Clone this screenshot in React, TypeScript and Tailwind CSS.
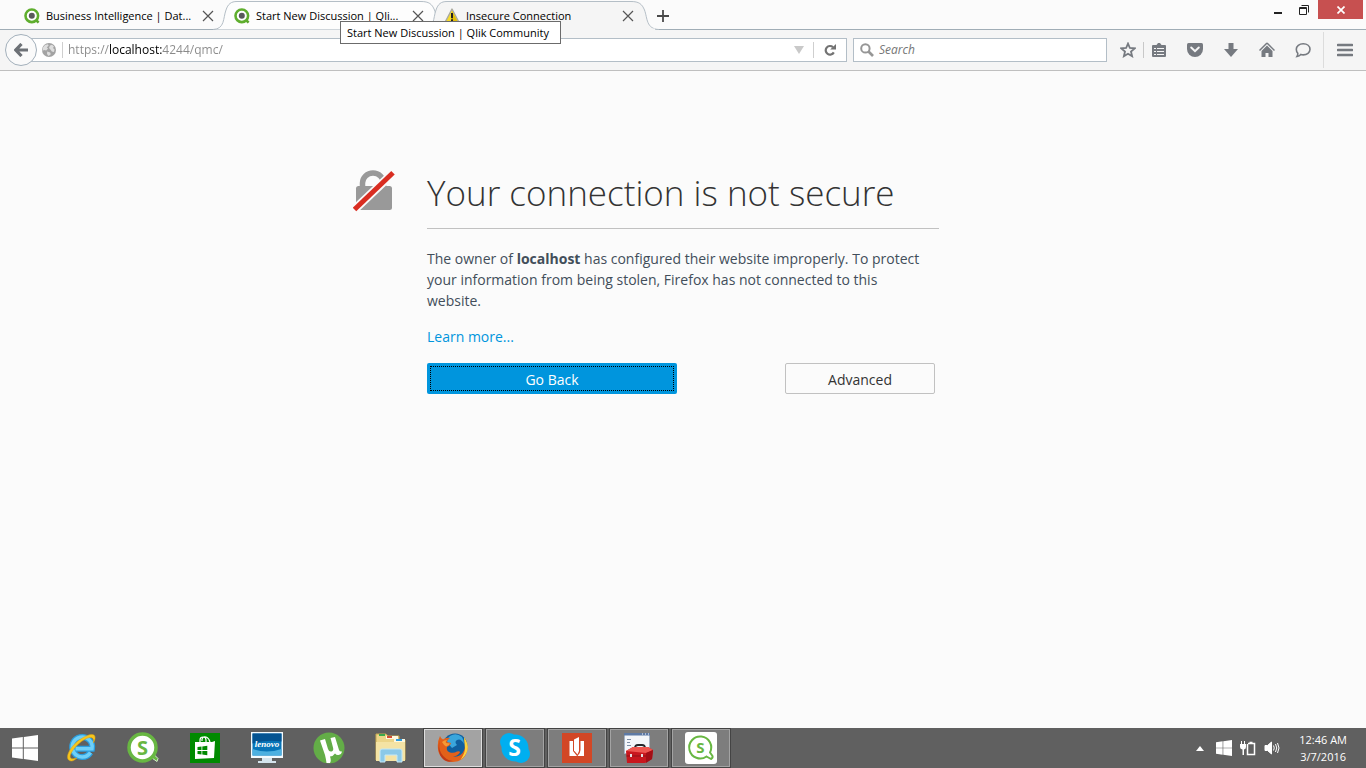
import type { ReactNode } from "react";

const TABS = [
  { title: "Business Intelligence | Dat...", icon: "qlik", shape: "none" },
  { title: "Start New Discussion | Qli...", icon: "qlik", shape: "hover" },
  { title: "Insecure Connection", icon: "warning", shape: "active" },
];

const PINNED = [
  { name: "Internet Explorer", icon: <ExplorerIcon /> },
  { name: "Qlik Sense", icon: <SenseIcon /> },
  { name: "Store", icon: <StoreIcon /> },
  { name: "Lenovo", icon: <LenovoIcon /> },
  { name: "uTorrent", icon: <TorrentIcon /> },
  { name: "File Explorer", icon: <FolderIcon /> },
];

const RUNNING = [
  { name: "Firefox", icon: <FirefoxIcon />, active: true },
  { name: "Skype", icon: <SkypeIcon />, active: false },
  { name: "Reader", icon: <ReaderIcon />, active: false },
  { name: "Toolbox", icon: <ToolboxIcon />, active: false },
  { name: "Qlik Sense Desktop", icon: <SenseDesktopIcon />, active: false },
];

function QlikIcon() {
  return (
    <svg width="16" height="16" viewBox="0 0 16 16" className="shrink-0" aria-hidden>
      <path d="M11 11l3.6 3.6" stroke="#5aa52b" strokeWidth="2.6" />
      <circle cx="7.8" cy="7.8" r="6.3" fill="#fff" stroke="#5fae2e" strokeWidth="2.6" />
      <circle cx="7.8" cy="7.8" r="3" fill="#58595b" />
    </svg>
  );
}

function WarningIcon() {
  return (
    <svg width="16" height="16" viewBox="0 0 16 16" className="shrink-0" aria-hidden>
      <path d="M8 1 15.2 14.8H.8z" fill="#f7dc2a" stroke="#a9a9a0" strokeWidth="1.4" strokeLinejoin="round" />
      <path d="M8 3 13.8 14H8z" fill="#e2bd08" />
      <path d="M8 5v5.2" stroke="#222" strokeWidth="2" />
      <path d="M7 11.3h2v2H7z" fill="#222" />
    </svg>
  );
}

function TabShape({ active }: { active: boolean }) {
  return (
    <svg width="236" height="30" viewBox="0 0 236 30" className="absolute -left-[11px] top-0" aria-hidden>
      <path
        d="M0 29.5C12 29 10 18 13 10C15 4 18 1.5 24 1.5H208C216 1.5 219 4 221.5 10C224.5 18 223 29 236 29.5"
        fill={active ? "#f5f5f5" : "#fdfdfd"}
        stroke="#b4bec6"
      />
      {active && <path d="M4 29.5H232" stroke="#f5f5f5" strokeWidth="2" />}
    </svg>
  );
}

function TabStrip() {
  return (
    <div className="relative z-10 flex h-[30px] border-b border-[#a0adb6] pl-3.5">
      <div className="flex" role="tablist">
        {TABS.map((tab) => (
          <div key={tab.title} className="relative h-[30px] w-[210px]">
            {tab.shape !== "none" && <TabShape active={tab.shape === "active"} />}
            <div className="relative flex h-full items-center pb-px pl-2.5 pr-1.5 pt-0.5">
              <button
                role="tab"
                aria-selected={tab.shape === "active"}
                className="flex min-w-0 flex-1 items-center gap-1.5 whitespace-nowrap text-left text-[11px] leading-4"
              >
                {tab.icon === "qlik" ? <QlikIcon /> : <WarningIcon />}
                {tab.title}
              </button>
              <button aria-label="Close tab" className="flex size-5 items-center justify-center">
                <svg width="12" height="12" viewBox="0 0 12 12" aria-hidden>
                  <path d="M1 1l10 10M11 1L1 11" stroke="#555" strokeWidth="1.2" />
                </svg>
              </button>
            </div>
            {tab.shape === "hover" && (
              <div
                role="tooltip"
                className="absolute left-[116px] top-[21px] z-30 flex h-[23px] w-[221px] items-center whitespace-nowrap border border-[#6b6b6b] bg-white pl-1.5 pt-px text-[11px]"
              >
                Start New Discussion | Qlik Community
              </div>
            )}
          </div>
        ))}
      </div>
      <button aria-label="New tab" className="ml-[7px] flex w-6 items-center justify-center pt-0.5">
        <svg width="12" height="12" viewBox="0 0 12 12" aria-hidden>
          <path d="M6 0v12M0 6h12" stroke="#4a4a4a" strokeWidth="1.8" />
        </svg>
      </button>
      <div className="ml-auto flex h-[19px] items-center">
        <button aria-label="Minimize" className="flex h-full w-[26px] items-center justify-center">
          <svg width="10" height="10" viewBox="0 0 10 10" aria-hidden>
            <path d="M1 7h8v2H1z" fill="#222" />
          </svg>
        </button>
        <button aria-label="Restore" className="mr-px flex h-full w-[26px] items-center justify-center">
          <svg width="10" height="10" viewBox="0 0 10 10" aria-hidden>
            <path d="M.5 2.5h7v7h-7zM0 3.500h8M2.5.5h7v7" fill="none" stroke="#222" />
          </svg>
        </button>
        <button aria-label="Close" className="mr-[3px] flex h-full w-[45px] items-center justify-center bg-[#c75050]">
          <svg width="8" height="8" viewBox="0 0 8 8" aria-hidden>
            <path d="M.5.5l7 7M7.5.5l-7 7" stroke="#fff" strokeWidth="1.7" />
          </svg>
        </button>
      </div>
    </div>
  );
}

function ToolButton({ label, children }: { label: string; children: ReactNode }) {
  return (
    <button aria-label={label} className="flex h-8 w-9 items-center justify-center">
      <svg width="16" height="16" viewBox="0 0 16 16" fill="#767a80" aria-hidden>
        {children}
      </svg>
    </button>
  );
}

function Toolbar() {
  return (
    <div className="flex h-[41px] items-center border-b border-[#bfbfbf] bg-[#f5f5f5] pl-[5px]">
      <button
        aria-label="Back"
        className="relative z-10 flex size-8 shrink-0 items-center justify-center rounded-full border border-[#a3b0bb] bg-[#fafafa]"
      >
        <svg width="14" height="14" viewBox="0 0 14 14" aria-hidden>
          <path d="M7.5 1 1.8 7l5.7 6M2.5 7H14" fill="none" stroke="#6d7176" strokeWidth="3.2" />
        </svg>
      </button>
      <div className="-ml-1.5 flex h-6 min-w-0 flex-1 items-center border border-[#b3bec7] bg-white pl-2.5">
        <svg width="14" height="14" viewBox="0 0 14 14" className="shrink-0" aria-hidden>
          <circle cx="7" cy="7" r="7" fill="#a3a3a3" />
          <path d="M1 4.5 3 2l3-.8.6 1.6-1.8 1.4L6 5.6 4.2 7.4 2 7 .5 8zM8 2.4l2-.6 2 1.6L11 5l1.6 1.4L12 9l-2.2-.4L8.4 6.4 7 5zM5.2 8.6l3 .8.6 1.8L6.600 13 5 11z" fill="#dedede" />
        </svg>
        <span className="ml-1.5 h-4 w-px bg-[#cfcfcf]" />
        <input
          aria-label="Address"
          defaultValue="https://localhost:4244/qmc/"
          className="ml-[5px] min-w-0 flex-1 bg-[linear-gradient(90deg,#8a8a8a_0,#8a8a8a_42px,#000_42px,#000_94px,#8a8a8a_94px)] bg-clip-text text-[12px] text-transparent outline-none"
        />
        <button aria-label="Show history" className="flex w-5 justify-center">
          <svg width="10" height="8" viewBox="0 0 10 8" aria-hidden>
            <path d="M0 0h10L5 8z" fill="#c9c9c9" />
          </svg>
        </button>
        <span className="ml-1 h-4 w-px bg-[#cfcfcf]" />
        <button aria-label="Reload" className="flex w-8 justify-center">
          <svg width="12" height="12" viewBox="0 0 12 12" aria-hidden>
            <path d="M9 3.2A4.3 4.3 0 1 0 9.8 8.4" fill="none" stroke="#737373" strokeWidth="2.2" />
            <path d="M6.2 5.4H12V0z" fill="#737373" />
          </svg>
        </button>
      </div>
      <label className="ml-1.5 flex h-6 w-[254px] shrink-0 items-center border border-[#b3bec7] bg-white pl-1.5">
        <svg width="14" height="14" viewBox="0 0 14 14" aria-hidden>
          <circle cx="5.4" cy="5.4" r="4.2" fill="none" stroke="#969696" strokeWidth="2" />
          <path d="M8.5 8.5 13 13" stroke="#969696" strokeWidth="2.6" />
        </svg>
        <input
          aria-label="Search"
          placeholder="Search"
          className="ml-[5px] min-w-0 flex-1 text-[12px] italic outline-none placeholder:text-[#767676]"
        />
      </label>
      <div className="ml-[3px] flex shrink-0 items-center">
        <ToolButton label="Bookmark this page">
          <path d="M8 1.6 9.9 6l4.700.4-3.6 3.1 1.1 4.7L8 11.7l-4.1 2.5L5 9.5 1.4 6.4 6.1 6z" fill="none" stroke="#767a80" strokeWidth="1.8" />
        </ToolButton>
        <span className="-ml-[3px] h-4 w-px bg-[#c8c8c8]" />
        <div className="-ml-[3px] flex">
          <ToolButton label="Bookmarks">
            <path d="M2 3h3.5L7 1h2l1.5 2H14q1 0 1 1v10q0 1-1 1H2q-1 0-1-1V4q0-1 1-1z" />
            <path d="M3 6h2v1H3zM6 6h7v1H6zM3 9h2v1H3zM6 9h7v1H6zM3 12h2v1H3zM6 12h7v1H6z" fill="#f5f5f5" />
          </ToolButton>
          <ToolButton label="Save to Pocket">
            <path d="M1.5 1h13Q16 1 16 2.5V7A8 8 0 0 1 0 7V2.5Q0 1 1.5 1z" />
            <path d="M4.2 5.5 8 9.2l3.8-3.7" fill="none" stroke="#f5f5f5" strokeWidth="2" strokeLinecap="round" />
          </ToolButton>
          <ToolButton label="Downloads">
            <path d="M5.5 1h5v6H15l-7 8-7-8h4.5z" />
          </ToolButton>
          <ToolButton label="Home">
            <path d="M8 1 15.500 8.500M8 1 .5 8.500" fill="none" stroke="#767a80" strokeWidth="1.5" />
            <path d="M8 3.600 13.500 9V15H9.500v-4h-3v4h-4V9z" />
          </ToolButton>
          <ToolButton label="Start a conversation">
            <path d="M8.2 1.8c3.9 0 6.8 2.3 6.8 5.5s-3 5.6-6.8 5.6q-1.3 0-2.4-.4-1.5 1.8-3.8 2 .9-1.3.8-3.2-1.5-1.6-1.5-4c0-3.2 3-5.5 6.9-5.5z" fill="none" stroke="#767a80" strokeWidth="1.6" />
          </ToolButton>
        </div>
        <span className="ml-0.5 h-9 w-px bg-[#dcdcdc]" />
        <button aria-label="Menu" className="flex h-8 w-[42px] items-center justify-center">
          <svg width="16" height="14" viewBox="0 0 16 14" aria-hidden>
            <path d="M1 2h14M1 7h14M1 12h14" stroke="#767a80" strokeWidth="2.6" strokeLinecap="round" />
          </svg>
        </button>
      </div>
    </div>
  );
}

function ErrorPage() {
  return (
    <main className="grid flex-1 grid-cols-[74px_minmax(0,512px)_74px] content-start justify-center pt-24">
      <svg width="42" height="42" viewBox="0 0 42 42" className="mt-[3px]" aria-hidden>
        <path d="M9.5 18v-5a10.500 10 0 0 1 21 0v5" fill="none" stroke="#999" strokeWidth="5.5" />
        <rect x="3" y="16" width="36" height="24" rx="2.5" fill="#999" />
        <path d="M.5 40.5 41 2" stroke="#fbfbfb" strokeWidth="8.5" />
        <path d="M1.5 39.5 40 2.8" stroke="#d92d21" strokeWidth="5" />
      </svg>
      <div>
        <h1 className="border-b border-[#c1c1c1] pb-3 pt-0.5 text-[35px] font-light leading-[47px] text-[#333]">
          Your connection is not secure
        </h1>
        <p className="mt-[19px] pr-2 text-[14px] leading-[21px] text-[#424e5a]">
          The owner of <b>localhost</b> has configured their website improperly. To protect
          your information from being stolen, Firefox has not connected to this website.
        </p>
        <p className="mt-[15px] text-[14px] leading-[21px]">
          <a href="#learn" className="text-[#0095dd]">
            Learn more...
          </a>
        </p>
        <div className="mr-1 mt-4 flex justify-between text-[14px]">
          <button className="h-[31px] w-[250px] rounded-xs bg-[#0095dd] p-[3px] text-white">
            <span className="flex h-full items-center justify-center border border-dotted border-black pt-px">
              Go Back
            </span>
          </button>
          <button className="h-[31px] w-[150px] rounded-xs border border-[#c1c1c1] pt-px text-[#333]">Advanced</button>
        </div>
      </div>
    </main>
  );
}

function WindowsIcon({ size }: { size: number }) {
  return (
    <svg width={size} height={size} viewBox="0 0 26 26" fill="#fff" aria-hidden>
      <path d="M0 3.6 10.800 2v10.500H0zM11.800 1.900 26 0v12.500H11.800zM0 13.500h10.800V24L0 22.400zM11.800 13.500H26V26l-14.200-1.900z" />
    </svg>
  );
}

function ExplorerIcon() {
  return (
    <svg width="32" height="32" viewBox="0 0 32 32" aria-hidden>
      <path d="M25.5 20.5A10 10 0 1 1 27 16.8H10.5" fill="none" stroke="#2b9fe0" strokeWidth="6" />
      <path d="M25.5 20.5A10 10 0 1 1 27 16.8H10.5" fill="none" stroke="#6fd0f8" strokeWidth="3.5" />
      <path d="M6 29C-2 28 5 14 15 7.5 23 2 31 0 30 6.5 29.8 8 29 10 28.3 11 29 7.5 28.5 5 24.5 5.5 18 6.5 8 16 5.5 22.5 4.5 25.5 5.5 27 8.5 26.8 10 26.7 11 26.3 12 25.8 10.5 27.500 8 29.200 6 29z" fill="#f7c61d" stroke="#e0a410" strokeWidth=".5" />
    </svg>
  );
}

function SenseIcon() {
  return (
    <svg width="32" height="32" viewBox="0 0 32 32" aria-hidden>
      <path d="M22 24l8 5.500 1-3-5-5z" fill="#68b742" stroke="#d5eec9" />
      <circle cx="15.5" cy="15.5" r="13.5" fill="#fff" stroke="#68b742" strokeWidth="3.5" />
      <text x="15.5" y="23" textAnchor="middle" fontSize="20" fontWeight="700" fill="#68b742">S</text>
    </svg>
  );
}

function StoreIcon() {
  return (
    <svg width="30" height="30" viewBox="0 0 30 30" aria-hidden>
      <path d="M0 0h30v30H0z" fill="#008a00" />
      <path d="M10 10V7q0-3 3-3t3 3v3M12 8V6q1-3 4-2t4 5" fill="none" stroke="#fff" strokeWidth="1.2" />
      <path d="M5 9h17l3-1-1 17-19 1z" fill="#fff" />
      <path d="M7.5 14l4-.5V17h-4zM12.300 13.400l5-.7V17h-5zM7.500 18h4v3.500l-4-.5zM12.300 18h5v4.300l-5-.7z" fill="#008a00" />
    </svg>
  );
}

function LenovoIcon() {
  return (
    <svg width="32" height="32" viewBox="0 0 32 32" aria-hidden>
      <path d="M11 25h10v4h4v2H7v-2h4z" fill="#d5e4ed" />
      <path d="M0 0h32v26H0z" fill="#f4fafd" />
      <path d="M1.5 1.500h29v22h-29z" fill="#0875b8" />
      <path d="M1.5 1.500h29v8q-15-2-29 2z" fill="#045391" />
      <path d="M1.5 17q14 5 29 0v6.500h-29z" fill="#4db0e0" />
      <text x="16" y="15" textAnchor="middle" fontFamily="Liberation Serif" fontSize="9" fontStyle="italic" fontWeight="700" fill="#fff">lenovo</text>
    </svg>
  );
}

function TorrentIcon() {
  return (
    <svg width="32" height="32" viewBox="0 0 32 32" aria-hidden>
      <circle cx="16" cy="16" r="15.500" fill="#63ad47" />
      <path d="M7 8.500 12 7l3 10q1 3 3.500 2.500 2.500-1 1.500-4L17.500 6l4.500-1 4 13q.8 2 3 1.500-.5 3-3.500 3.500-2 .3-3.500-1.500-2 3-5 3 1.500 4 0 6.500h-3.500Q13 27 12 23z" fill="#fff" />
    </svg>
  );
}

function FolderIcon() {
  return (
    <svg width="32" height="32" viewBox="0 0 32 32" aria-hidden>
      <path d="M1 2h10l2 2h11v4h6v20H1z" fill="#ecd588" stroke="#c6a850" />
      <path d="M4 2h6v2H4z" fill="#3aa94c" />
      <path d="M11 4h12v3H11z" fill="#fff8df" />
      <path d="M12 4h5v2h-5z" fill="#d34b33" />
      <path d="M19 7h11v3H19z" fill="#fff8df" />
      <path d="M21 7h6v2h-6z" fill="#2d9ce0" />
      <path d="M1 10h29v19H1z" fill="#f4e3a4" />
      <path d="M5 30V19q0-2 2-2h18q2 0 2 2v11h-5v-7H10v7z" fill="#8bc9e8" stroke="#c4e8f7" />
    </svg>
  );
}

function FirefoxIcon() {
  return (
    <svg width="32" height="32" viewBox="0 0 32 32" aria-hidden>
      <circle cx="18" cy="14" r="12.500" fill="#0f5f9f" />
      <path d="M13 4q6-4 12 1 2 3 2 7-3-6-7-4-3 2 0 5l-5 3-5-6q0-4 3-6z" fill="#3aa6dc" />
      <path d="M3 4q1 3 3 3.500Q9 5 13 6q-3 2-3 4l4 1q0 2-4 4-1 4 3 5.500 4 1 7-1 3-1 3 1-3 4-7 4 8 1 11-6 2-6 0-12 5 6 3 13-3 10.500-14 10.500T1.500 20Q-.5 11 3 4z" fill="#e2611a" />
      <path d="M27 5q5 7 3.500 13-1.500 6-7 10 5-8 4.500-12T27 5z" fill="#fcd23c" />
      <path d="M3 8q-2 8 1 13 4 7 12 8-8 3-13-6-3-7 0-15z" fill="#c03a17" />
      <path d="M5 10q2-2 5-2-2 2-1 3l4 .5q-1 2-4 3-2-1-4-4.500z" fill="#f59a35" />
    </svg>
  );
}

function SkypeIcon() {
  return (
    <svg width="32" height="32" viewBox="0 0 32 32" aria-hidden>
      <circle cx="10" cy="10" r="9" fill="#00aff0" />
      <circle cx="22" cy="22" r="9" fill="#00aff0" />
      <circle cx="16" cy="16" r="13.500" fill="#00aff0" />
      <text x="15.500" y="24" textAnchor="middle" fontSize="23" fontWeight="700" fill="#fff">S</text>
    </svg>
  );
}

function ReaderIcon() {
  return (
    <svg width="30" height="30" viewBox="0 0 30 30" aria-hidden>
      <path d="M0 0h30v30H0z" fill="#d24726" />
      <path d="M7.500 8H11v10l4 5H7.500z" fill="#fff" />
      <path d="M12 6.500 17 4v14l-1.500 3.500L12 17.500z" fill="#fff" />
      <path d="M18.500 8H22v15h-6.500q3-3 3-6z" fill="#fff" />
    </svg>
  );
}

function ToolboxIcon() {
  return (
    <svg width="32" height="32" viewBox="0 0 32 32" aria-hidden>
      <path d="M1.500 1.500h25v20h-25z" fill="#f3f6fa" stroke="#a5b3c4" />
      <path d="M1 1h26v2.500H1z" fill="#5d7aa6" />
      <path d="M19 2h1M22 2h1M25 2h1" stroke="#fff" />
      <path d="M4 7.500h4M4 10.500h3M4 13.500h4" stroke="#7d8ea6" />
      <path d="M12 18v-2q0-3 3-3h4q3 0 3 3v2" fill="none" stroke="#26282c" strokeWidth="1.800" />
      <path d="M3 19l7-4h15l5 3-1 9-7 4H4z" fill="#c8171e" />
      <path d="M3 19l7-4h15l5 3-7 3z" fill="#ee5650" />
      <path d="M23 21l7-3-1 9-6 4z" fill="#a30f16" />
      <path d="M3.500 24H23" fill="none" stroke="#8f1317" />
      <path d="M7 22h2v3H7zM18 22h2v3h-2z" fill="#e0e0e0" />
    </svg>
  );
}

function SenseDesktopIcon() {
  return (
    <svg width="32" height="32" viewBox="0 0 32 32" aria-hidden>
      <rect width="32" height="32" rx="3" fill="#fff" />
      <path d="M21.500 24.500A11 11 0 1 1 25 20.500l2.500 3.500q.5 2-1.500 3l-4.500-2.500" fill="none" stroke="#68b742" strokeWidth="2" strokeLinecap="round" strokeLinejoin="round" />
      <text x="15.500" y="21" textAnchor="middle" fontSize="15" fontWeight="700" fill="#68b742">S</text>
    </svg>
  );
}

function Taskbar() {
  return (
    <footer className="flex h-10 items-center bg-[#606060]">
      <button aria-label="Start" className="flex h-full w-[50px] items-center justify-center">
        <WindowsIcon size={26} />
      </button>
      {PINNED.map((app) => (
        <button key={app.name} aria-label={app.name} className="flex h-full w-[62px] items-center justify-center">
          {app.icon}
        </button>
      ))}
      <div className="ml-px flex h-full gap-0.5">
        {RUNNING.map((app) => (
          <button
            key={app.name}
            aria-label={app.name}
            className={`flex h-full w-[60px] items-center justify-center border border-[#444] inset-ring ${
              app.active ? "bg-[#a3a3a3] inset-ring-[#dedede]" : "bg-[#7d7d7d] inset-ring-[#a3a3a3]"
            }`}
          >
            {app.icon}
          </button>
        ))}
      </div>
      <div className="ml-auto flex items-center gap-2">
        <button aria-label="Show hidden icons" className="mr-1 flex items-center">
          <svg width="8" height="5" viewBox="0 0 8 5" aria-hidden>
            <path d="M4 0l4 5H0z" fill="#fff" />
          </svg>
        </button>
        <WindowsIcon size={16} />
        <svg width="16" height="16" viewBox="0 0 16 16" fill="none" stroke="#fff" aria-hidden>
          <path d="M1.500 1v3M4.500 1v3" />
          <path d="M0 4h6v3q0 2-2 2.500V15H2.500V9.500Q0 9 0 7z" fill="#fff" stroke="none" />
          <path d="M8 3.500h6.500v11H7.500V4M9.500 2.500h3" strokeWidth="1.500" />
        </svg>
        <svg width="16" height="16" viewBox="0 0 16 16" fill="none" stroke="#fff" aria-hidden>
          <path d="M1 5.500h2.500L7.500 2v12L3.500 10.500H1z" fill="#fff" />
          <path d="M9.500 5.500q1.500 2.500 0 5M11.500 4q2.500 4 0 8M13.500 3q3 5 0 10" />
        </svg>
        <div className="ml-[11px] mr-[19px] text-center text-[11px] leading-[17px] text-white">
          <p>12:46 AM</p>
          <p>3/7/2016</p>
        </div>
      </div>
    </footer>
  );
}

export default function App() {
  return (
    <div className="flex min-h-screen flex-col bg-[#fbfbfb] font-['Open_Sans','Noto_Sans',sans-serif] text-black">
      <TabStrip />
      <Toolbar />
      <ErrorPage />
      <Taskbar />
    </div>
  );
}
